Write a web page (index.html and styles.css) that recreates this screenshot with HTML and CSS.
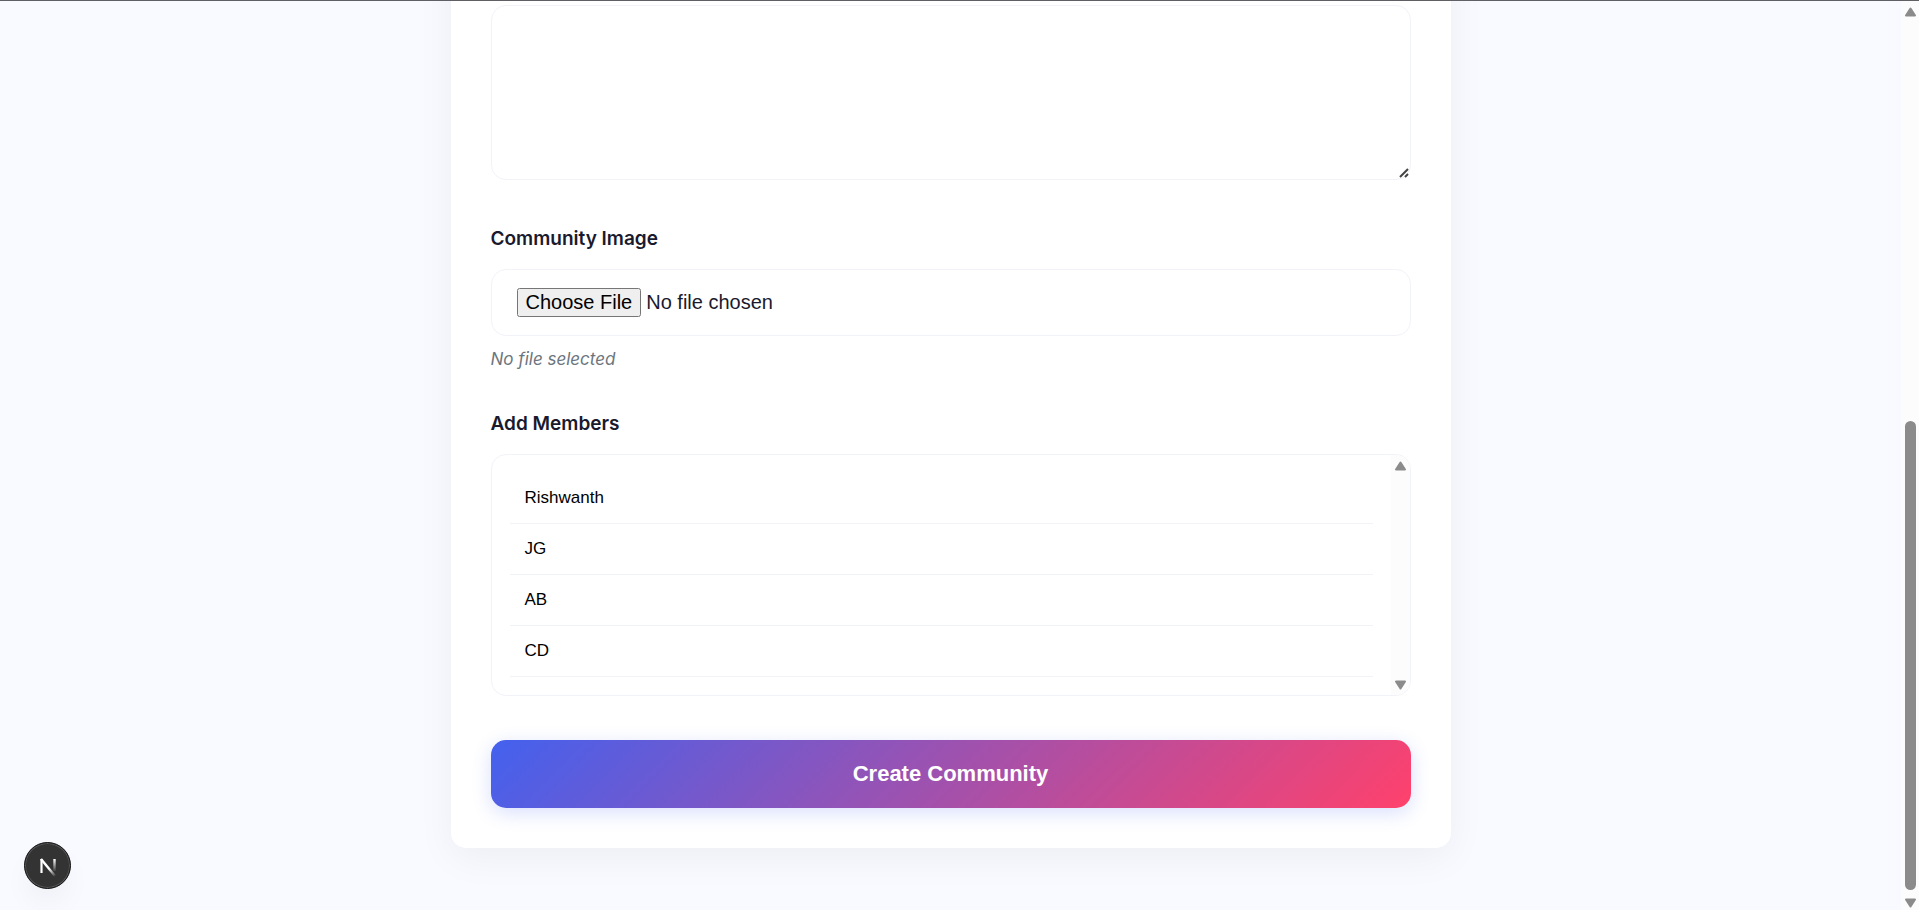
FILE: index.html
```html
<!DOCTYPE html>
<html lang="en">
<head>
<meta charset="utf-8">
<title>Create Community</title>
<link rel="stylesheet" href="styles.css">
</head>
<body>
<div class="viewport">
  <main class="page">
    <form class="card">
      <div class="description-box">
        <textarea class="field description" aria-label="Description"></textarea>
        <svg class="grip" viewBox="0 0 10 10" aria-hidden="true"><path d="M1 9 9 1M6 9 9 6"/></svg>
      </div>

      <div class="group">
        <label class="label" for="image">Community Image</label>
        <input class="field file" type="file" id="image">
        <p class="hint">No file selected</p>
      </div>

      <div class="group">
        <label class="label" for="members">Add Members</label>
        <div class="members">
          <select class="field list" id="members" multiple>
            <option>Rishwanth</option>
            <option>JG</option>
            <option>AB</option>
            <option>CD</option>
          </select>
          <div class="list-scroll" aria-hidden="true">
            <svg class="arrow" viewBox="0 0 13 10"><path d="M6.500 1.500 11 8.500H2Z"/></svg>
            <svg class="arrow" viewBox="0 0 13 10"><path d="M6.500 8.500 2 1.500H11Z"/></svg>
          </div>
        </div>
      </div>

      <button class="submit" type="button">Create Community</button>
    </form>
  </main>

  <div class="page-scroll" aria-hidden="true">
    <svg class="arrow" viewBox="0 0 13 10"><path d="M6.500 1.500 11 8.500H2Z"/></svg>
    <div class="track"><div class="thumb"></div></div>
    <svg class="arrow" viewBox="0 0 13 10"><path d="M6.500 8.500 2 1.500H11Z"/></svg>
  </div>
</div>

<button class="dev-badge" type="button" aria-label="Open Next.js Dev Tools">
  <svg viewBox="0 0 40 40" width="40" height="40" fill="none">
    <defs>
      <linearGradient id="stem" x1="0" y1="13" x2="0" y2="26" gradientUnits="userSpaceOnUse">
        <stop stop-color="#fff"/><stop offset="1" stop-color="#fff" stop-opacity="0"/>
      </linearGradient>
      <linearGradient id="diagonal" x1="22" y1="22" x2="28" y2="30" gradientUnits="userSpaceOnUse">
        <stop stop-color="#fff"/><stop offset="1" stop-color="#fff" stop-opacity="0"/>
      </linearGradient>
    </defs>
    <path d="M13.500 27V13" stroke="#fff" stroke-width="2.200"/>
    <path d="M13 13 27 30" stroke="url(#diagonal)" stroke-width="2.400"/>
    <path d="M26.500 13V25" stroke="url(#stem)" stroke-width="2.400"/>
  </svg>
</button>
</body>
</html>
```
FILE: styles.css
```css
* {
  box-sizing: border-box;
}

body {
  margin: 0;
  overflow: hidden;
  background: #f8faff;
  color: #1a1a2e;
  font-family: Inter, "Liberation Sans", sans-serif;
}

.viewport {
  display: flex;
  height: 100vh;
  border-top: 1px solid #5f5f64;
}

.page {
  flex: 1;
  min-width: 0;
  overflow: hidden;
  padding: 0 40px 62px;
}

/* The card continues above the visible part of the scrolled page. */
.card {
  display: flex;
  flex-direction: column;
  max-width: 1000px;
  margin: -80px auto 0;
  padding: 84px 40px 40px;
  border-radius: 15px;
  background: #fff;
  box-shadow: 0 10px 38px rgba(0, 0, 0, 0.05);
}

.field {
  display: block;
  width: 100%;
  margin: 0;
  border: 1px solid #f2f2f9;
  border-radius: 15px;
  background: #fff;
  color: #1a1a2e;
  font-family: "Liberation Sans", Arial, sans-serif;
  font-size: 20px;
  outline: none;
}

.description-box {
  position: relative;
}

.description {
  height: 175px;
  padding: 18px 25px;
  resize: none;
}

.grip {
  position: absolute;
  right: 2px;
  bottom: 2px;
  width: 10px;
  height: 10px;
  fill: none;
  stroke: #444;
  stroke-width: 2;
}

.group {
  margin-top: 44px;
}

.label {
  display: block;
  margin-bottom: 15px;
  font-size: 19px;
  font-weight: 600;
  line-height: 30px;
}

.file {
  padding: 18px 25px;
}

.file::file-selector-button {
  margin-right: 5px;
  padding: 1px 7px;
}

.hint {
  margin: 9px 0 0;
  color: #6c757d;
  font-size: 17px;
  font-style: italic;
  line-height: 28px;
}

.group + .group {
  margin-top: 36px;
}

.members {
  position: relative;
}

.list {
  height: 242px;
  padding: 18px 37px 18px 18px;
  overflow: hidden;
}

.list option {
  min-height: 51px;
  padding: 15px;
  border-bottom: 1px solid #f2f2f9;
  color: #000;
  font-size: 17px;
  line-height: 20px;
}

.list-scroll {
  position: absolute;
  top: 1px;
  right: 1px;
  bottom: 1px;
  display: flex;
  flex-direction: column;
  align-items: center;
  justify-content: space-between;
  width: 19px;
  padding: 6px 0 5px;
  border-radius: 0 14px 14px 0;
  background: #fcfcfc;
}

.arrow {
  flex: none;
  width: 13px;
  height: 10px;
  fill: #8b8b8b;
  stroke: #8b8b8b;
  stroke-width: 2;
  stroke-linejoin: round;
}

.submit {
  height: 68px;
  margin-top: 44px;
  padding: 0 25px;
  border: 0;
  border-radius: 15px;
  background: linear-gradient(135deg, #4361ee, #ff416c);
  box-shadow: 0 5px 19px rgba(67, 97, 238, 0.2);
  color: #fff;
  font-family: "Liberation Sans", Arial, sans-serif;
  font-size: 22px;
  font-weight: 700;
}

.page-scroll {
  display: flex;
  flex-direction: column;
  align-items: center;
  width: 18px;
  padding: 6px 0 2px;
  background: #fcfcfc;
}

.track {
  display: flex;
  flex: 1;
  flex-direction: column;
  justify-content: flex-end;
  width: 11px;
  padding: 5px 0 8px;
}

.thumb {
  height: 54%;
  border-radius: 6px;
  background: #8b8b8b;
}

.dev-badge {
  position: fixed;
  bottom: 21px;
  left: 24px;
  display: grid;
  place-items: center;
  width: 47px;
  height: 47px;
  padding: 0;
  border: 1px solid #111;
  border-radius: 50%;
  background: #333;
  box-shadow: inset 0 0 0 1px #555, 0 16px 32px -8px rgba(0, 0, 0, 0.08);
}
```
